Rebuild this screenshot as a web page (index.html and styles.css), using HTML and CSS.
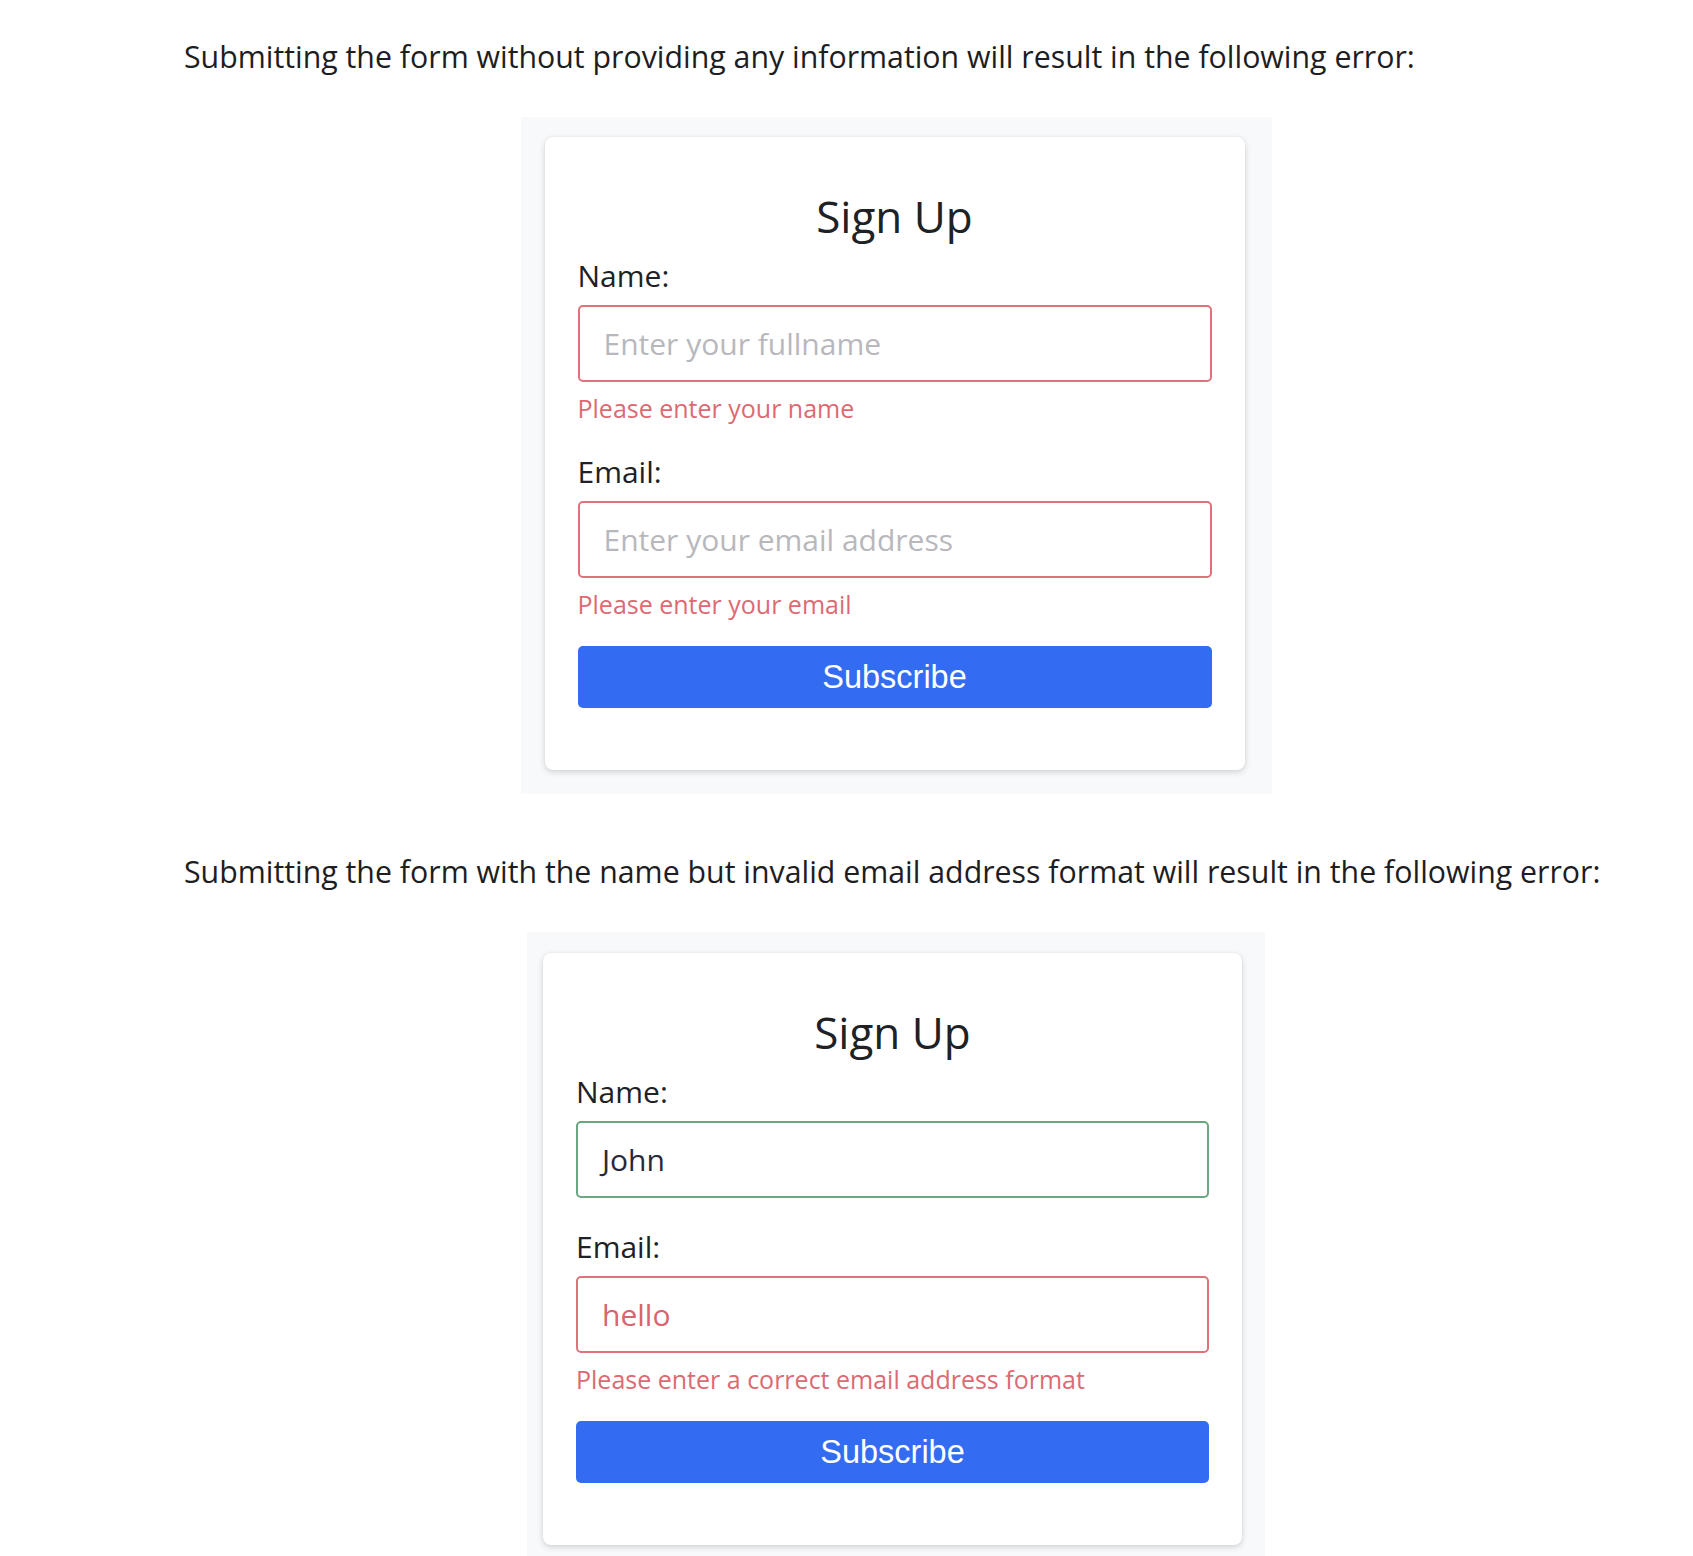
FILE: index.html
```html
<!DOCTYPE html>
<html lang="en">
<head>
<meta charset="utf-8">
<title>Form validation</title>
<link rel="stylesheet" href="styles.css">
</head>
<body>
<main class="article">
  <p class="para para-first">Submitting the form without providing any information will result in the following error:</p>
  <figure class="shot shot-one">
    <form class="card" onsubmit="return false">
      <h2 class="title">Sign Up</h2>
      <label class="label" for="n1">Name:</label>
      <div class="input input-error"><span class="placeholder">Enter your fullname</span></div>
      <p class="error">Please enter your name</p>
      <label class="label label-gap" for="e1">Email:</label>
      <div class="input input-error"><span class="placeholder">Enter your email address</span></div>
      <p class="error">Please enter your email</p>
      <button class="btn" type="button">Subscribe</button>
    </form>
  </figure>
  <p class="para para-second">Submitting the form with the name but invalid email address format will result in the following error:</p>
  <figure class="shot shot-two">
    <form class="card" onsubmit="return false">
      <h2 class="title">Sign Up</h2>
      <label class="label" for="n2">Name:</label>
      <div class="input input-ok"><span class="value">John</span></div>
      <label class="label label-gap2" for="e2">Email:</label>
      <div class="input input-error"><span class="value value-error">hello</span></div>
      <p class="error">Please enter a correct email address format</p>
      <button class="btn" type="button">Subscribe</button>
    </form>
  </figure>
</main>
</body>
</html>
```
FILE: styles.css
```css
html, body {
  margin: 0;
  padding: 0;
  background: #ffffff;
}

body {
  font-family: "Open Sans", "Noto Sans", sans-serif;
  color: #1b1b1f;
}

.article {
  width: 1424px;
  padding-left: 184px;
  display: flex;
  flex-direction: column;
}

.para {
  margin: 0;
  font-size: 30.3px;
  line-height: 40px;
  color: #1d1d22;
  white-space: nowrap;
}

.para-first {
  margin-top: 37px;
}

.para-second {
  margin-top: 58px;
}

.shot {
  margin: 0;
  align-self: center;
  background: #f8f9fb;
  display: flex;
  flex-direction: column;
}

.shot-one {
  margin-top: 40px;
  width: 751px;
  padding: 20px 27px 24px 24px;
  box-sizing: border-box;
}

.shot-two {
  margin-top: 40px;
  width: 738px;
  padding: 21px 23px 24px 16px;
  box-sizing: border-box;
}

.card {
  background: #ffffff;
  border-radius: 8px;
  box-shadow: 0 2px 6px rgba(0, 0, 0, 0.16), 0 0 2px rgba(0, 0, 0, 0.06);
  padding: 53px 33px 62px 33px;
  display: flex;
  flex-direction: column;
}

.title {
  margin: 0 0 14px 0;
  text-align: center;
  font-weight: 400;
  font-size: 44px;
  line-height: 53px;
  color: #202124;
}

.label {
  font-size: 30px;
  line-height: 38px;
  color: #202124;
  margin-bottom: 10px;
}

.label-gap {
  margin-top: 29px;
}

.label-gap2 {
  margin-top: 30px;
}

.input {
  height: 77px;
  box-sizing: border-box;
  border: 2px solid #e07279;
  border-radius: 5px;
  padding: 0 24px;
  display: flex;
  align-items: center;
  font-size: 30px;
}

.input-ok {
  border-color: #6aa67f;
}

.placeholder {
  color: #b8b8bc;
}

.value {
  color: #28283a;
}

.value-error {
  color: #d9646d;
}

.error {
  margin: 10px 0 0 0;
  font-size: 25px;
  line-height: 32px;
  color: #dc6a73;
}

.btn {
  margin-top: 26px;
  height: 62px;
  border: none;
  border-radius: 5px;
  background: #336cf0;
  color: #ffffff;
  font-family: "Liberation Sans", Arial, sans-serif;
  font-size: 32.5px;
  cursor: pointer;
}
```
